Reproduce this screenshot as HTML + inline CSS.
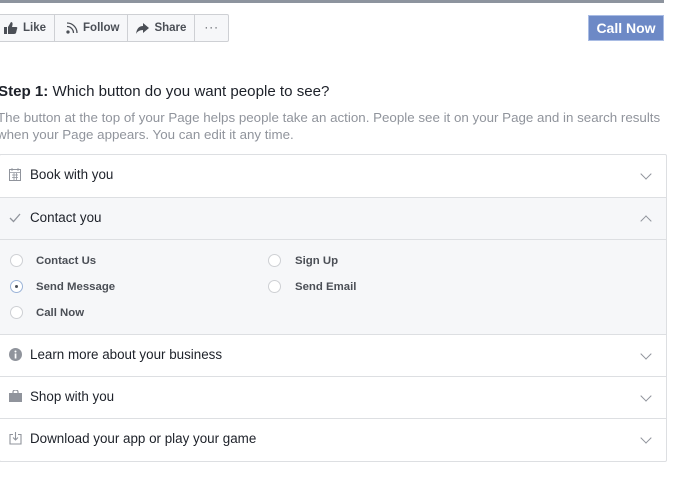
<!DOCTYPE html>
<html><head><style>
body{margin:0;width:698px;height:489px;background:#fff;font-family:"Liberation Sans",sans-serif;position:relative;overflow:hidden;color:#1d2129}
.a{position:absolute}
.topbar{left:0;top:0;width:664px;height:3px;background:#8d949e}
.grp{left:-6px;top:14px;height:26px;border:1px solid #ced0d4;border-radius:2px;display:flex;background:#f6f7f9}
.grp div{height:26px;line-height:26px;font-size:11.5px;font-weight:bold;color:#4b4f56;border-right:1px solid #ced0d4;padding:0 8px;display:flex;align-items:center;gap:5px}
.grp div:last-child{border-right:0}
.call{left:588px;top:15px;width:74px;height:24px;background:#6d89c6;border:1px solid #a9bce4;color:#fff;font-weight:bold;font-size:14px;text-align:center;line-height:24px}
h1{position:absolute;left:-2px;top:83px;margin:0;font-size:15.1px;font-weight:normal;color:#1d2129}
.desc{left:-3px;top:109px;font-size:13.35px;line-height:17px;color:#90949c;width:700px}
.panel{left:-1px;top:154px;width:666px;height:306px;border:1px solid #dddfe2;border-radius:2px}
.row{position:absolute;left:0;width:666px;border-bottom:1px solid #dddfe2;font-size:13.4px;color:#1d2129}
.row span.t{position:absolute;left:30px}
.chev{position:absolute;right:16px;width:7px;height:7px;border-right:1.5px solid #90949c;border-bottom:1.5px solid #90949c;transform:rotate(45deg)}
.opt{position:absolute;font-size:11.4px;font-weight:bold;color:#4b4f56}
.rad{position:absolute;width:11px;height:11px;border:1px solid #ced0d4;border-radius:50%;background:#fff}
</style></head><body>
<div class="a topbar"></div>
<div class="a grp">
<div style="padding-left:9px"><svg width="14" height="12" viewBox="0 0 14 12"><rect x="0" y="5" width="3" height="7" fill="#4b4f56"/><path d="M4 5 L7 0 Q9 0 8.5 3 L8 5 H12 Q14 5 13 7 L12 11 Q11.5 12 10 12 H4Z" fill="#4b4f56"/></svg>Like</div>
<div style="padding:0 8px 0 11px"><svg width="12" height="12" viewBox="0 0 12 12" fill="none" stroke="#4b4f56" stroke-width="1.3"><path d="M1 1 A10 10 0 0 1 11 11"/><path d="M1 4.5 A6.5 6.5 0 0 1 7.5 11"/><circle cx="2" cy="10" r="1" fill="#4b4f56"/></svg>Follow</div>
<div style="padding:0 8px"><svg width="13" height="11" viewBox="0 0 13 11"><path d="M7 0 L13 5 L7 10 V7 Q2 7 0 11 Q1 3 7 3Z" fill="#4b4f56"/></svg>Share</div>
<div style="padding:0 9px;letter-spacing:1px;font-weight:normal">···</div>
</div>
<div class="a call">Call Now</div>
<h1><b>Step 1:</b> Which button do you want people to see?</h1>
<div class="a desc">The button at the top of your Page helps people take an action. People see it on your Page and in search results<br>when your Page appears. You can edit it any time.</div>
<div class="a panel">
<div class="row" style="top:0;height:42px;line-height:40px"><svg class="a" style="left:9px;top:13px" width="12" height="13" viewBox="0 0 12 13" fill="none" stroke="#90949c"><rect x="0.5" y="1.5" width="11" height="11"/><path d="M0.5 4.5H11.5M3 0V3M9 0V3M3 7H9M3 9.5H9M5 5V12M7.5 5V12" stroke-width="0.8"/></svg><span class="t">Book with you</span><div class="chev" style="top:15px"></div></div>
<div class="row" style="top:43px;height:41px;line-height:40px;background:#f6f7f9"><svg class="a" style="left:9px;top:15px" width="12" height="10" viewBox="0 0 12 10" fill="none" stroke="#90949c" stroke-width="1.3"><path d="M1 5 L4.5 8.5 L11 1"/></svg><span class="t">Contact you</span><div class="chev" style="top:19px;transform:rotate(-135deg)"></div></div>
<div class="row" style="top:85px;height:94px;background:#f6f7f9">
<div class="rad" style="left:10px;top:14px"></div><div class="opt" style="left:36px;top:15px">Contact Us</div>
<div class="rad" style="left:10px;top:40px;border-color:#9cb4d8"></div><div class="a" style="left:15px;top:45px;width:3px;height:3px;border-radius:50%;background:#4b4f56"></div><div class="opt" style="left:36px;top:41px">Send Message</div>
<div class="rad" style="left:10px;top:66px"></div><div class="opt" style="left:36px;top:67px">Call Now</div>
<div class="rad" style="left:268px;top:14px"></div><div class="opt" style="left:295px;top:15px">Sign Up</div>
<div class="rad" style="left:268px;top:40px"></div><div class="opt" style="left:295px;top:41px">Send Email</div>
</div>
<div class="row" style="top:180px;height:41px;line-height:40px"><svg class="a" style="left:9px;top:13px" width="13" height="13" viewBox="0 0 13 13"><circle cx="6.5" cy="6.5" r="6.5" fill="#90949c"/><rect x="5.7" y="5.5" width="1.7" height="5" fill="#fff"/><circle cx="6.5" cy="3.5" r="1" fill="#fff"/></svg><span class="t">Learn more about your business</span><div class="chev" style="top:15px"></div></div>
<div class="row" style="top:222px;height:41px;line-height:40px"><svg class="a" style="left:9px;top:13px" width="13" height="12" viewBox="0 0 13 12"><path d="M4 3V2Q4 0 6.5 0Q9 0 9 2V3" fill="none" stroke="#90949c" stroke-width="1.2"/><rect x="0" y="3" width="13" height="9" fill="#90949c"/></svg><span class="t">Shop with you</span><div class="chev" style="top:15px"></div></div>
<div class="row" style="top:264px;height:42px;line-height:40px;border-bottom:0"><svg class="a" style="left:9px;top:13px" width="13" height="13" viewBox="0 0 13 13" fill="none" stroke="#90949c" stroke-width="1.1"><path d="M4 2.5H1V12H12V2.5H9"/><path d="M6.5 0V8M4 5.5L6.5 8L9 5.5"/></svg><span class="t">Download your app or play your game</span><div class="chev" style="top:15px"></div></div>
</div>
</body></html>
